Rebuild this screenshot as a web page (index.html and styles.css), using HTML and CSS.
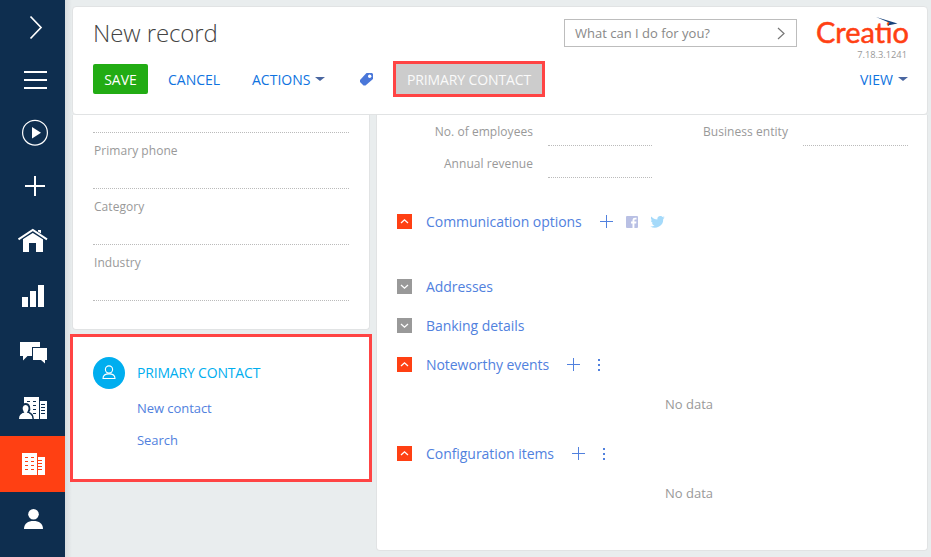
FILE: index.html
```html
<!DOCTYPE html>
<html lang="en">
<head>
<meta charset="utf-8">
<title>New record</title>
<link rel="stylesheet" href="styles.css">
</head>
<body>
<div class="app">
  <nav class="sidebar">
    <a class="nav short"><svg width="65" height="53" fill="none" stroke="#fff" stroke-width="1.7"><path d="M30.5 16.5 41 27.5 30.5 38.500"/></svg></a>
    <a class="nav short"><svg width="65" height="53" fill="#fff"><path d="M24 18h23v2H24zM24 26h23v2H24zM24 34h23v2H24z"/></svg></a>
    <a class="nav short"><svg width="65" height="53"><circle cx="35" cy="26.700" r="12.400" fill="none" stroke="#fff" stroke-width="1.200"/><path d="M32 21l9 5.800-9 5.800z" fill="#fff"/></svg></a>
    <a class="nav short"><svg width="65" height="53" fill="#fff"><path d="M34 17h2v9h9v2h-9v9h-2v-9h-9v-2h9z"/></svg></a>
    <a class="nav"><svg width="65" height="56"><path d="M23 26.500 32.800 20 43 26.500V40h-7v-9h-7v9h-6zM38 18h3v6h-3z" fill="#fff"/><path d="M18.500 27.500 32.800 18.500 47 27.500" fill="none" stroke="#0e2e4f" stroke-width="4"/><path d="M18.500 27.300 32.800 18 47 27.300" fill="none" stroke="#fff" stroke-width="2"/></svg></a>
    <a class="nav"><svg width="65" height="56" fill="#fff"><path d="M22 29h6v10h-6zM30 23h6v16h-6zM38 17h6v22h-6z"/></svg></a>
    <a class="nav"><svg width="65" height="56" fill="#fff"><path d="M20 18h20v5h-8v9h-4.500L23 36.500V32h-3zM33 24h14v12h-2v3.500L41 36h-8z"/></svg></a>
    <a class="nav"><svg width="65" height="56"><path d="M24 17h15v22H24zM40 21h7v18h-7z" fill="#fff"/><path d="M27 21h3v1h-3zM33 21h3v1h-3zM33 25h3v1h-3zM33 29h3v1h-3zM33 33h3v1h-3zM41 24h4v1h-4zM41 27h4v1h-4zM41 30h4v1h-4zM41 33h4v1h-4z" fill="#0e2e4f"/><path d="M19 39c0-4 2-6 4-6.700-2.800-3.800-.7-8.300 2.600-8.300s5.400 4.500 2.600 8.300c2 .7 4.800 2.700 4.800 6.700z" fill="#fff" stroke="#0e2e4f" stroke-width="1.800"/><path d="M19 39q0-6 6.500-6.500Q32 33 32.500 39z" fill="#fff"/></svg></a>
    <a class="nav active"><svg width="65" height="56"><path d="M22 17h15v22H22zM38 21h7v18h-7z" fill="#fff"/><path d="M25 21h3v1h-3zM31 21h3v1h-3zM25 25h3v1h-3zM31 25h3v1h-3zM25 29h3v1h-3zM31 29h3v1h-3zM25 33h3v1h-3zM31 33h3v1h-3zM38 24h4v1h-4zM38 27h4v1h-4zM38 30h4v1h-4zM38 33h4v1h-4z" fill="#ff4013"/></svg></a>
    <a class="nav"><svg width="65" height="56" fill="#fff"><circle cx="33.500" cy="22.200" r="5.300"/><path d="M24 37c0-5.500 4-8 9.500-8s9.500 2.500 9.500 8z"/></svg></a>
  </nav>
  <main class="main">
    <header class="header">
      <div class="top">
        <h1 class="title">New record</h1>
        <div class="command"><span>What can I do for you?</span><svg width="9" height="13" fill="none" stroke="#777" stroke-width="1.200"><path d="M1 1l6 5.500L1 12"/></svg></div>
        <div class="brand">
          <svg class="logo" width="96" height="34"><text class="wordmark" x="0" y="28" textLength="93" lengthAdjust="spacingAndGlyphs">Creatio</text><path d="M73 0h7v11.500h-7z" fill="#fff"/><path d="M60 2 81.500 8.500 71.500 10.500 73.500 7.800z" fill="#17427a"/></svg>
          <div class="version">7.18.3.1241</div>
        </div>
      </div>
      <div class="toolbar">
        <button class="save">SAVE</button>
        <span class="action cancel">CANCEL</span>
        <span class="action actions">ACTIONS<i class="caret"></i></span>
        <svg class="tag" width="15" height="15"><path d="M7.500 1h5.500L14 2v5L6.500 13.500H4.500L1 10V8z" fill="#4a77d9"/><circle cx="10.700" cy="4.200" r="1.700" fill="#fff"/></svg>
        <span class="highlight">PRIMARY CONTACT</span>
        <span class="action view">VIEW<i class="caret"></i></span>
      </div>
    </header>
    <div class="columns">
      <div class="left">
        <section class="card profile">
          <div class="field first"></div>
          <div class="field">Primary phone</div>
          <div class="field">Category</div>
          <div class="field">Industry</div>
        </section>
        <section class="contact">
          <svg class="avatar" width="32" height="32"><circle cx="16" cy="16" r="16" fill="#00aeef"/><g fill="none" stroke="#fff" stroke-width="1.100"><circle cx="16" cy="12.500" r="3.600"/><path d="M10 21.500c0-3.300 2.800-4.600 6-4.600s6 1.300 6 4.600z"/></g></svg>
          <div class="links">
            <div class="contact-title">PRIMARY CONTACT</div>
            <a class="link">New contact</a>
            <a class="link">Search</a>
          </div>
        </section>
      </div>
      <section class="card details">
        <div class="form">
          <label class="lbl">No. of employees</label><div class="input"></div>
          <label class="lbl">Business entity</label><div class="input"></div>
          <label class="lbl">Annual revenue</label><div class="input"></div>
        </div>
        <div class="detail comm">
          <svg class="toggle open" viewBox="0 0 15 15"><path d="M4 9l3.500-3.200L11 9"/></svg><span class="name">Communication options</span>
          <svg class="plus" width="13" height="13"><path d="M6 0h1v6h6v1H7v6H6V7H0V6h6z"/></svg>
          <svg class="facebook" width="12" height="12"><rect width="12" height="12" rx="1" fill="#b9c0e4"/><path d="M6.500 12V7.500H5V5.500h1.500V4q0-2.300 2.500-2.300h1.500v1.800H9q-.6 0-.6.700v1.300h2L10.200 7.500H8.400V12z" fill="#fff"/></svg>
          <svg class="twitter" width="15" height="12" viewBox="0 0 24 20"><path d="M24 2.300c-.9.400-1.800.7-2.800.8 1-.6 1.800-1.600 2.200-2.700-1 .6-2 1-3.100 1.200A4.900 4.900 0 0 0 11.900 6C7.800 5.900 4.200 3.900 1.700.9.400 3.100 1 6 3.200 7.500c-.8 0-1.600-.2-2.200-.6-.1 2.300 1.600 4.400 3.900 4.900-.7.200-1.500.2-2.200.1.600 2 2.400 3.400 4.600 3.400A9.900 9.900 0 0 1 0 17.300 14 14 0 0 0 21.500 4.800c1-.7 1.800-1.600 2.500-2.500z" fill="#a5dafa"/></svg>
        </div>
        <div class="detail"><svg class="toggle" viewBox="0 0 15 15"><path d="M4 6l3.500 3.200L11 6"/></svg><span class="name">Addresses</span></div>
        <div class="detail"><svg class="toggle" viewBox="0 0 15 15"><path d="M4 6l3.500 3.200L11 6"/></svg><span class="name">Banking details</span></div>
        <div class="detail"><svg class="toggle open" viewBox="0 0 15 15"><path d="M4 9l3.500-3.200L11 9"/></svg><span class="name">Noteworthy events</span>
          <svg class="plus" width="13" height="13"><path d="M6 0h1v6h6v1H7v6H6V7H0V6h6z"/></svg><svg class="dots" width="2" height="12"><path d="M0 0h2v2H0zM0 5h2v2H0zM0 10h2v2H0z"/></svg></div>
        <div class="empty">No data</div>
        <div class="detail"><svg class="toggle open" viewBox="0 0 15 15"><path d="M4 9l3.500-3.200L11 9"/></svg><span class="name">Configuration items</span>
          <svg class="plus" width="13" height="13"><path d="M6 0h1v6h6v1H7v6H6V7H0V6h6z"/></svg><svg class="dots" width="2" height="12"><path d="M0 0h2v2H0zM0 5h2v2H0zM0 10h2v2H0z"/></svg></div>
        <div class="empty">No data</div>
      </section>
    </div>
  </main>
</div>
</body>
</html>
```
FILE: styles.css
```css
* { box-sizing: border-box; }
body { margin: 0; font-family: "Open Sans", sans-serif; font-size: 14px; overflow: hidden; background: #e9edee; }
svg { display: block; flex: none; }
.app { display: flex; width: 931px; height: 557px; }
.sidebar { width: 65px; background: #0e2e4f; flex: none; }
.nav { display: block; height: 56px; }
.nav.short { height: 53px; }
.nav.active { background: #ff4013; }
.main { flex: 1; padding: 6px 3px 0 7px; background: linear-gradient(90deg, #d8dcdf, #e9edee 7px); }
.header { width: 856px; height: 109px; background: #fff; border: 1px solid #e1e3e4; border-radius: 4px; padding: 0 19px 0 20px; }
.top { display: flex; height: 57px; }
.title { margin: 9px 0 0; width: 471px; flex: none; font-weight: 300; font-size: 24px; line-height: 34px; letter-spacing: -.1px; color: #444; }
.command { display: flex; flex: none; align-items: center; justify-content: space-between; width: 233px; height: 28px; margin-top: 12px; padding: 0 10px; border: 1px solid #bdbdbd; font-size: 13px; color: #888; white-space: nowrap; }
.brand { margin-left: 19px; width: 96px; flex: none; margin-top: 8px; }
.logo { overflow: visible; }
.wordmark { font-family: Lato, sans-serif; font-size: 28px; fill: #ff4013; stroke: #ff4013; stroke-width: .5px; }
.version { font-size: 9.3px; line-height: 12px; color: #999; text-align: right; padding-right: 5px; }
.toolbar { display: flex; align-items: center; height: 30px; }
.save { width: 55px; height: 30px; padding: 0; border: 0; border-radius: 2px; background: #22ac14; color: #fff; font: 500 14px "Open Sans", sans-serif; }
.action { display: flex; align-items: center; color: #0f73e0; white-space: nowrap; }
.cancel { margin-left: 20px; width: 52px; }
.actions { margin-left: 32px; width: 73px; justify-content: space-between; }
.caret { border: 5px solid transparent; border-top: 4px solid #4a66a0; border-bottom: 0; margin-top: -1px; }
.tag { margin-left: 34px; }
.highlight { width: 152px; height: 36px; margin-left: 19px; border: 3px solid #ff4444; background: #ccc; color: #fafafa; text-align: center; line-height: 31px; letter-spacing: -.12px; }
.view { margin-left: auto; width: 48px; justify-content: space-between; }
.columns { display: flex; align-items: flex-start; gap: 4px; }
.left { width: 300px; margin-left: -2px; flex: none; }
.card { background: #fff; border: 1px solid #e1e3e4; border-top: 0; }
.profile { width: 298px; margin-left: 2px; height: 215px; border-radius: 0 0 4px 4px; padding: 0 20px; }
.field { height: 56px; padding-top: 9px; padding-left: 1px; border-bottom: 1px dotted #bbb; font-size: 12px; line-height: 18px; letter-spacing: .05px; color: #999; }
.field.first { height: 18px; }
.contact { width: 302px; height: 148px; margin-top: 4px; border: 3px solid #ff4444; background: #fff; display: flex; padding: 20px; }
.links { margin-left: 12px; }
.contact-title { height: 32px; line-height: 32px; letter-spacing: -.18px; color: #00aeef; }
.link { display: block; line-height: 18px; margin-top: 10px; margin-bottom: 14px; color: #5181de; font-size: 13px; letter-spacing: -.06px; }
.link + .link { margin-top: 14px; }
.details { width: 552px; flex: none; height: 436px; margin-left: 2px; border-radius: 0 0 4px 4px; padding: 0 19px; }
.form { display: grid; grid-template-columns: 137px 104px 122px 105px; column-gap: 14.5px; grid-auto-rows: 32px; height: 87px; }
.lbl { text-align: right; color: #999; font-size: 12px; line-height: 18px; padding-top: 8px; white-space: nowrap; letter-spacing: .05px; }
.input { height: 31px; border-bottom: 1px dotted #bbb; }
.detail { display: flex; align-items: center; height: 39px; }
.comm { margin-bottom: 26px; }
.toggle { width: 15px; height: 15px; margin-left: 1px; margin-right: 14px; background: #999; fill: none; stroke: #fff; stroke-width: 1.300; }
.toggle.open { background: #ff4013; }
.name { color: #5181de; font-size: 14px; white-space: nowrap; line-height: 20px; letter-spacing: -.05px; }
.plus { margin-left: 18px; fill: #5181de; }
.dots { margin-left: 18px; fill: #5181de; }
.facebook { margin-left: 13px; }
.twitter { margin-left: 12px; }
.empty { height: 50px; padding-top: 11px; line-height: 18px; padding-left: 74px; text-align: center; font-size: 13px; color: #999; }
```
